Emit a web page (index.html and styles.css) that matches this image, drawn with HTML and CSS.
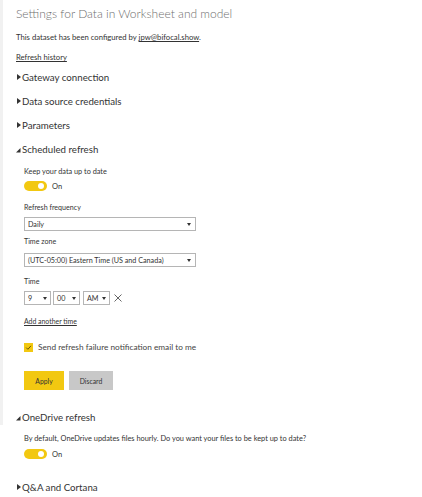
FILE: index.html
```html
<!DOCTYPE html>
<html>
<head>
<meta charset="utf-8">
<link rel="stylesheet" href="styles.css">
</head>
<body>
<div class="page">
  <div class="edge"></div>
  <div class="content">
    <h1 class="title">Settings for Data in Worksheet and model</h1>
    <p class="desc">This dataset has been configured by <a class="link" href="#">jpw@bifocal.show</a>.</p>
    <p class="hist"><a class="link" href="#">Refresh history</a></p>

    <div class="section first"><svg class="tri" width="4" height="6" viewBox="0 0 4 6"><path d="M0 0 L4 3 L0 6 Z" fill="#333"/></svg><span>Gateway connection</span></div>
    <div class="section"><svg class="tri" width="4" height="6" viewBox="0 0 4 6"><path d="M0 0 L4 3 L0 6 Z" fill="#333"/></svg><span>Data source credentials</span></div>
    <div class="section"><svg class="tri" width="4" height="6" viewBox="0 0 4 6"><path d="M0 0 L4 3 L0 6 Z" fill="#333"/></svg><span>Parameters</span></div>
    <div class="section"><svg class="tri open" width="5" height="6" viewBox="0 0 5 6"><path d="M0 5.5 L4.5 5.5 L4.5 1 Z" fill="#333"/></svg><span>Scheduled refresh</span></div>

    <div class="body">
      <div class="label l-keep">Keep your data up to date</div>
      <div class="toggle-row t-keep"><span class="toggle"><span class="knob"></span></span><span class="on">On</span></div>

      <div class="label l-freq">Refresh frequency</div>
      <div class="select wide s-freq"><span>Daily</span><span class="arrow"></span></div>

      <div class="label l-tz">Time zone</div>
      <div class="select wide s-tz"><span>(UTC-05:00) Eastern Time (US and Canada)</span><span class="arrow"></span></div>

      <div class="label l-time">Time</div>
      <div class="time-row">
        <div class="select small"><span>9</span><span class="arrow"></span></div>
        <div class="select small"><span>00</span><span class="arrow"></span></div>
        <div class="select small"><span>AM</span><span class="arrow"></span></div>
        <svg class="x" width="8" height="8" viewBox="0 0 8 8"><path d="M0.5 0.5 L7.5 7.5 M7.5 0.5 L0.5 7.5" stroke="#555" stroke-width="0.9"/></svg>
      </div>

      <div class="add"><a class="link" href="#">Add another time</a></div>

      <div class="check-row">
        <span class="check"><svg width="9" height="9" viewBox="0 0 9 9"><path d="M2.2 4.6 L3.9 6.3 L7 2.8" stroke="#5a4a00" stroke-width="0.9" fill="none"/></svg></span>
        <span class="check-text">Send refresh failure notification email to me</span>
      </div>

      <div class="buttons">
        <button class="btn apply">Apply</button>
        <button class="btn discard">Discard</button>
      </div>
    </div>

    <div class="section od"><svg class="tri open" width="5" height="6" viewBox="0 0 5 6"><path d="M0 5.5 L4.5 5.5 L4.5 1 Z" fill="#333"/></svg><span>OneDrive refresh</span></div>
    <div class="body">
      <div class="label l-od">By default, OneDrive updates files hourly. Do you want your files to be kept up to date?</div>
      <div class="toggle-row od-toggle"><span class="toggle"><span class="knob"></span></span><span class="on">On</span></div>
    </div>
    <div class="section qa"><svg class="tri" width="4" height="6" viewBox="0 0 4 6"><path d="M0 0 L4 3 L0 6 Z" fill="#333"/></svg><span>Q&amp;A and Cortana</span></div>
  </div>
</div>
</body>
</html>
```
FILE: styles.css
```css
html, body {
  margin: 0;
  padding: 0;
  background: #fff;
}
body {
  font-family: Lato, "Open Sans", "Liberation Sans", sans-serif;
  color: #333;
  width: 422px;
  height: 497px;
  overflow: hidden;
}
.page {
  display: flex;
}
.edge {
  width: 3px;
  height: 425px;
  background: #f1f1f1;
  flex: none;
}
.content {
  padding-left: 13px;
  flex: 1;
}
.title {
  margin: 4px 0 0 0;
  font-size: 12px;
  line-height: 20px;
  font-weight: 300;
  color: #6e6e6e;
}
.desc {
  margin: 7px 0 0 0;
  font-size: 7.7px;
  line-height: 12px;
  color: #333;
}
.hist {
  margin: 8px 0 0 0;
  font-size: 7.7px;
  line-height: 12px;
}
.link {
  color: #333;
  text-decoration: underline;
}
.section {
  display: flex;
  align-items: center;
  height: 16px;
  margin-top: 8px;
  font-size: 9.7px;
  color: #333;
}
.section.first {
  margin-top: 6px;
}
.tri {
  margin-left: 1px;
  margin-right: 1px;
  flex: none;
}
.tri.open {
  margin-left: 0;
  margin-top: 1px;
}
.body {
  padding-left: 8px;
}
.label {
  font-size: 7.1px;
  line-height: 12px;
  color: #333;
}
.l-keep { margin-top: 9px; font-size: 7.3px; }
.t-keep { margin-top: 2px; }
.l-freq { margin-top: 10px; }
.s-freq { margin-top: 3px; }
.l-tz { margin-top: 5px; }
.s-tz { margin-top: 5px; }
.l-time { margin-top: 9px; }
.l-od { margin-top: 8px; font-size: 7.4px; }
.toggle-row {
  display: flex;
  align-items: center;
  height: 12px;
}
.toggle {
  width: 23px;
  height: 10px;
  border-radius: 5px;
  background: #f2c811;
  position: relative;
  display: inline-block;
}
.knob {
  position: absolute;
  right: 3px;
  top: 2px;
  width: 6px;
  height: 6px;
  border-radius: 50%;
  background: #fff;
}
.on {
  font-size: 7.5px;
  margin-left: 5px;
  color: #333;
}
.select {
  box-sizing: border-box;
  height: 14px;
  border: 1px solid #b5b5b5;
  background: #fff;
  display: flex;
  align-items: center;
  justify-content: space-between;
  padding: 0 4px 0 3px;
  font-size: 7.2px;
  color: #333;
}
.select.wide {
  width: 172px;
}
.arrow {
  width: 0;
  height: 0;
  border-left: 2.5px solid transparent;
  border-right: 2.5px solid transparent;
  border-top: 3.5px solid #333;
}
.time-row {
  display: flex;
  align-items: center;
  gap: 2px;
  margin-top: 3px;
}
.select.small {
  width: 27px;
  padding-right: 3px;
}
.select.small + .select.small + .select.small {
  margin-left: 1px;
}
.x {
  margin-left: 2px;
}
.add {
  margin-top: 10px;
  font-size: 6.9px;
  line-height: 12px;
}
.check-row {
  display: flex;
  align-items: center;
  margin-top: 13px;
  height: 14px;
}
.check {
  width: 9px;
  height: 9px;
  background: #f2c811;
  display: inline-flex;
  align-items: center;
  justify-content: center;
}
.check svg { display: block; }
.check-text {
  margin-left: 5px;
  font-size: 8.25px;
  color: #444;
}
.buttons {
  display: flex;
  gap: 5px;
  margin-top: 17px;
}
.btn {
  height: 19px;
  border: none;
  font-family: inherit;
  font-size: 6.8px;
  color: #333;
  padding: 0;
  margin: 0;
}
.apply {
  width: 40px;
  background: #f2c811;
}
.discard {
  width: 44px;
  background: #c8c8c8;
}
.section.od {
  margin-top: 19px;
}
.od-toggle {
  margin-top: 3px;
}
.section.qa {
  margin-top: 19px;
}
```
